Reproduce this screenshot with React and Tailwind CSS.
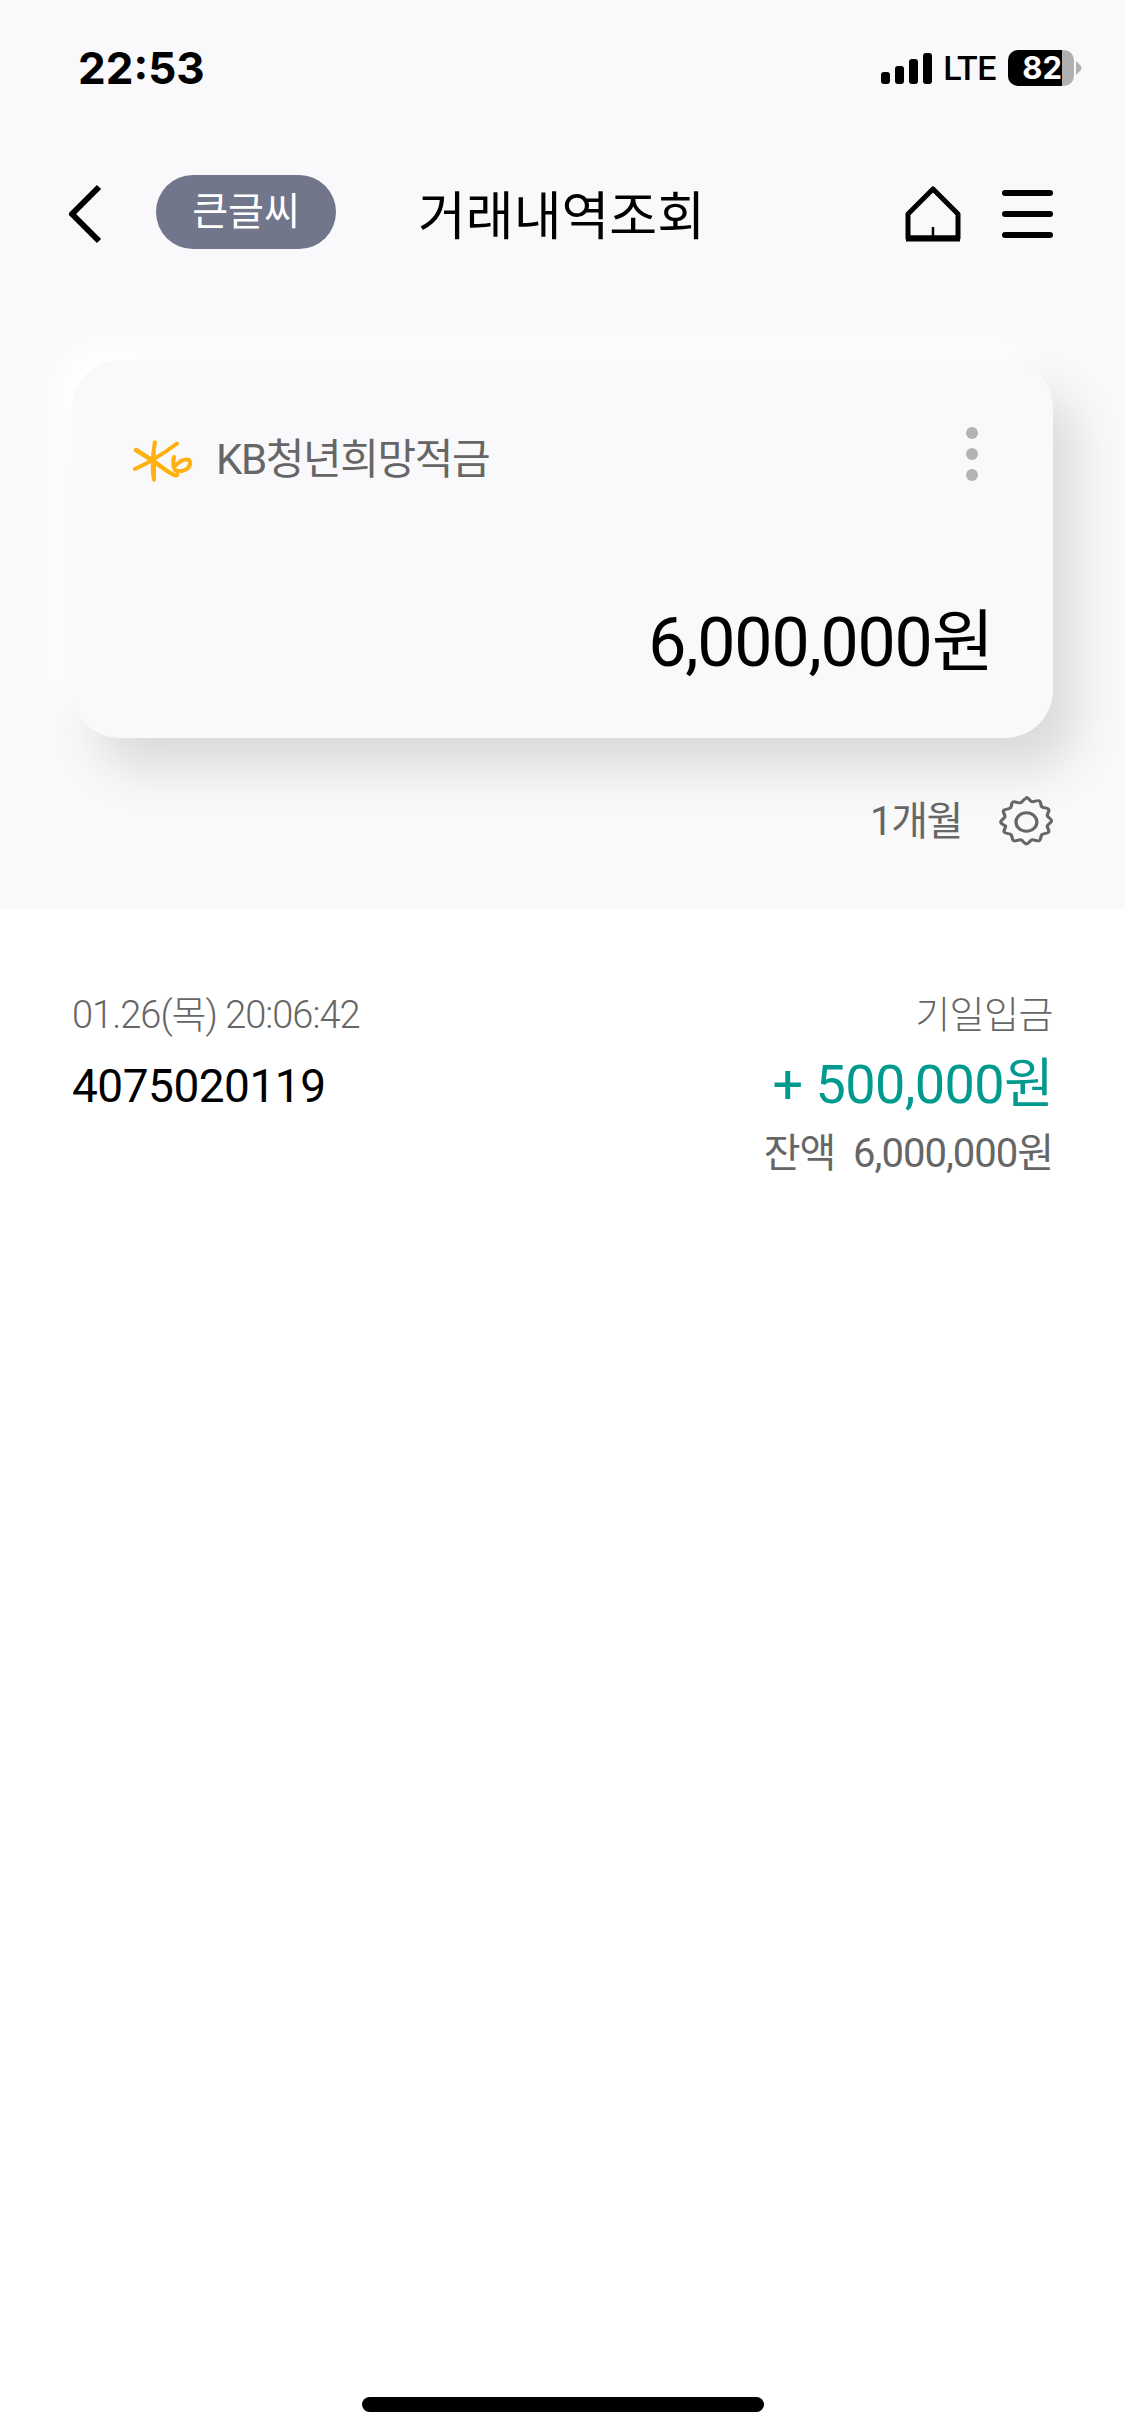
import React from 'react'

const font = "font-['Roboto','Noto_Sans_CJK_KR',sans-serif]"

const StatusBar = () => (
  <div className="flex justify-between items-center shrink-0 h-[68px] mt-[34px] pl-[78px] pr-[43px]">
    <span className="font-['Inter',sans-serif] font-bold text-[44px] leading-none text-black">22:53</span>
    <div className="flex items-center">
      <div className="flex items-end gap-[5px] h-[31px]">
        <div className="w-[9px] h-[12px] bg-black rounded-[3px]" />
        <div className="w-[9px] h-[18px] bg-black rounded-[3px]" />
        <div className="w-[9px] h-[25px] bg-black rounded-[3px]" />
        <div className="w-[9px] h-[31px] bg-black rounded-[3px]" />
      </div>
      <span className="ml-[11px] text-[34px] leading-none font-medium text-black tracking-[-0.5px]">LTE</span>
      <div className="ml-[12px] flex h-[36px] w-[66px] rounded-[10px] overflow-hidden bg-[#b0b0b0]">
        <div className="w-[54px] bg-black text-white font-['Inter',sans-serif] font-bold text-[31px] leading-[36px] text-right">82</div>
      </div>
      <svg width="6" height="14" viewBox="0 0 6 14" className="ml-[2px]">
        <path d="M0 0 L5 5 Q6 7 5 9 L0 14 Z" fill="#b0b0b0" />
      </svg>
    </div>
  </div>
)

const Header = () => (
  <div className="flex items-center shrink-0 h-[74px] mt-[73px] pl-[66px] pr-[72px]">
    <svg width="38" height="60" viewBox="0 0 38 60" className="shrink-0 mt-[4px]">
      <path d="M33 3 L6 30 L33 57" fill="none" stroke="#000" strokeWidth="6" strokeLinejoin="round" />
    </svg>
    <div className="ml-[52px] w-[180px] h-[74px] rounded-full bg-[#71768b] flex items-center justify-center text-white text-[39px] leading-none">
      큰글씨
    </div>
    <span className="ml-[82px] pt-[12px] text-[52px] leading-none text-black">거래내역조회</span>
    <div className="ml-auto mt-[4px] flex items-center">
      <svg width="56" height="56" viewBox="0 0 56 56">
        <path d="M3 52 V28 L28 3 L53 28 V52 Z" fill="none" stroke="#000" strokeWidth="5" strokeLinejoin="round" />
        <path d="M1 52.5 H55" stroke="#000" strokeWidth="6" />
        <path d="M28 41 V52" stroke="#000" strokeWidth="2.5" />
      </svg>
      <div className="ml-[41px] w-[51px] flex flex-col gap-[15px]">
        <div className="h-[6px] bg-black rounded-full" />
        <div className="h-[6px] bg-black rounded-full" />
        <div className="h-[6px] bg-black rounded-full" />
      </div>
    </div>
  </div>
)

const KbLogo = () => (
  <svg width="60" height="43" viewBox="0 0 60 43" className="shrink-0">
    <path d="M20 1 Q23 -1 24 2 Q22 12 23 21 L23 40 Q21 44 19 40 Q16 24 20 1 Z" fill="#ffb00f" />
    <g fill="none" stroke="#ffb00f" strokeLinecap="round">
      <path d="M3 10 Q18 19 30 28 T44 35" strokeWidth="4.4" />
      <path d="M2 29 Q22 20 44 3.5" strokeWidth="4" />
      <path d="M41 17 Q39 25 42 30 Q47 33 54 29 Q59 24 56 20 Q50 18 43 25" strokeWidth="4" />
    </g>
  </svg>
)

const GearIcon = () => (
  <svg width="54" height="52" viewBox="-0.6 0 24.8 26.8" preserveAspectRatio="none" fill="none" stroke="#666" strokeWidth="1.5" strokeLinejoin="round" className="shrink-0">
    <path d="M12 .8c1.1 0 1.5 1.8 2.5 2.1 1 .3 2.4-.9 3.4-.4.9.5.5 2.4 1.2 3.1.7.7 2.6.4 3.1 1.3.5.9-.8 2.2-.6 3.2.2 1 1.9 1.6 1.9 2.7s-1.7 1.6-1.9 2.6c-.2 1 1.1 2.3.6 3.2-.5.9-2.4.6-3.1 1.3-.7.7-.3 2.6-1.2 3.1-1 .5-2.4-.7-3.4-.4-1 .3-1.4 2.1-2.5 2.1s-1.5-1.8-2.5-2.1c-1-.3-2.4.9-3.4.4-.9-.5-.5-2.4-1.2-3.1-.7-.7-2.6-.4-3.1-1.3-.5-.9.8-2.2.6-3.2C1.9 15 .2 14.5.2 13.4s1.7-1.7 1.9-2.7c.2-1-1.1-2.3-.6-3.2.5-.9 2.4-.6 3.1-1.3.7-.7.3-2.6 1.2-3.1 1-.5 2.4.7 3.4.4 1-.3 1.4-2.1 2.5-2.1Z" />
    <circle cx="12" cy="13.4" r="4.8" />
  </svg>
)

const App = () => {
  return (
    <div className={`w-[1125px] h-[2436px] flex flex-col bg-white overflow-hidden ${font}`}>
      <section className="h-[909px] shrink-0 bg-[#f9f9fb] flex flex-col">
        <StatusBar />
        <Header />

        <div className="shrink-0 mt-[111px] mx-[72px] h-[378px] rounded-[48px] bg-[#f9f9fb] shadow-[24px_32px_48px_rgba(0,0,0,0.12),-18px_-18px_36px_#ffffff] flex flex-col pl-[61px] pr-[60px]">
          <div className="flex items-center mt-[80px] h-[43px]">
            <KbLogo />
            <span className="ml-[23px] pb-[3px] text-[42px] leading-none text-[#666] tracking-[-1.4px]">KB청년희망적금</span>
            <div className="ml-auto mr-[15px] mt-[-16px] flex flex-col gap-[9px]">
              <div className="w-[12px] h-[12px] rounded-full bg-[#b3b3b3]" />
              <div className="w-[12px] h-[12px] rounded-full bg-[#b3b3b3]" />
              <div className="w-[12px] h-[12px] rounded-full bg-[#b3b3b3]" />
            </div>
          </div>
          <div className="mt-[126px] text-right text-[68px] leading-none text-black tracking-[-1.2px]">6,000,000원</div>
        </div>

        <div className="mt-[58px] pr-[72px] flex items-center justify-end">
          <span className="text-[40px] leading-none text-[#666] tracking-[-1.4px]">1개월</span>
          <div className="ml-[37px]"><GearIcon /></div>
        </div>
      </section>

      <section className="flex-1 flex flex-col">
        <div className="mt-[84px] px-[72px] flex justify-between">
          <div className="flex flex-col">
            <span className="text-[38px] leading-[44px] font-light text-[#666] tracking-[-1px]">01.26(목) 20:06:42</span>
            <span className="mt-[24px] text-[46px] leading-[50px] text-black tracking-[-0.5px]">4075020119</span>
          </div>
          <div className="flex flex-col items-end">
            <span className="text-[38px] leading-[44px] font-light text-[#666] tracking-[-0.5px]">기일입금</span>
            <span className="mt-[22px] text-[54px] leading-[52px] text-[#009a8e] tracking-[-0.6px]">+ 500,000원</span>
            <span className="mt-[20px] text-[40px] leading-[46px] text-[#666] tracking-[-1px] whitespace-pre">잔액  6,000,000원</span>
          </div>
        </div>

        <div className="mt-auto mb-[24px] mx-auto w-[402px] h-[15px] rounded-full bg-black" />
      </section>
    </div>
  )
}

export default App
